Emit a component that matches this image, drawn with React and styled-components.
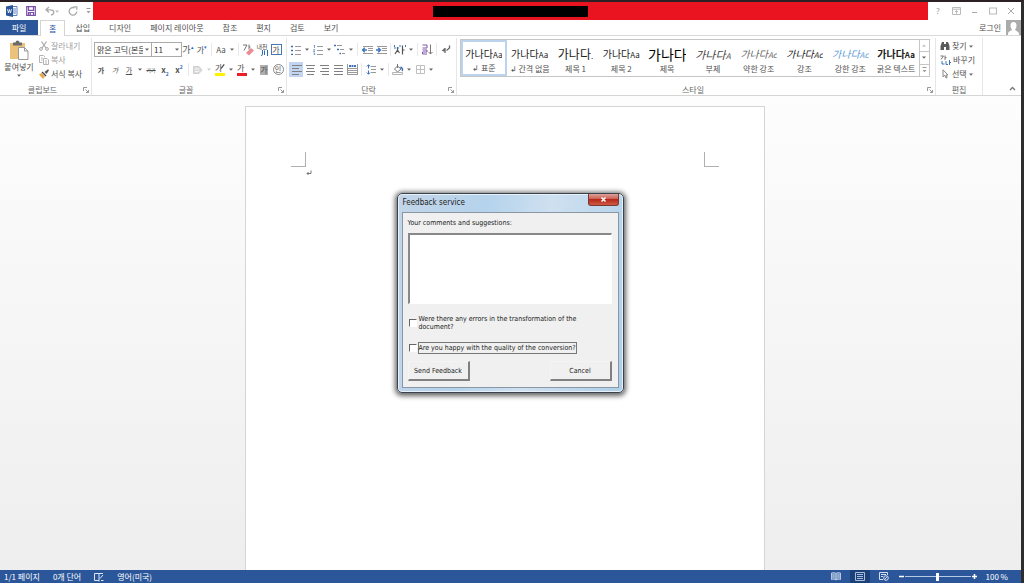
import React, { useState } from "react";
import styled, { createGlobalStyle, css } from "styled-components";

const GlobalStyle = createGlobalStyle`
  * { box-sizing: border-box; }
  body {
    margin: 0;
    font-family: "Noto Sans CJK KR", sans-serif;
    font-size: 8px;
    line-height: 12px;
    color: #505050;
  }
  button, select, input, textarea {
    font: inherit;
    color: inherit;
    margin: 0;
  }
  button {
    border: 0;
    padding: 0;
    background: none;
    white-space: nowrap;
  }
`;

const Window = styled.div`
  display: flex;
  flex-direction: column;
  min-height: 100vh;
  border-top: 2px solid #2c2024;
  border-right: 3px solid #2d2d30;
  background: #fff;
`;

/* ---------- title bar ---------- */

const TitleBar = styled.header`
  display: flex;
  height: 18px;
`;

const QuickAccess = styled.div`
  display: flex;
  align-items: center;
  width: 93px;
  padding-left: 5px;
  gap: 5px;
`;

const IconButton = styled.button`
  display: flex;
  align-items: center;
  justify-content: center;
  width: ${(p) => p.$w || 14}px;
  height: 14px;
  color: ${(p) => p.$color || "#777"};
`;

const TitleFill = styled.div`
  flex: 1;
  display: flex;
  align-items: center;
  justify-content: center;
  background: #ea1320;
`;

const TitleMask = styled.div`
  width: 155px;
  height: 11px;
  margin: 1px 0 0;
  background: #000;
`;

const WindowControls = styled.div`
  display: flex;
  align-items: center;
  justify-content: space-between;
  width: 93px;
  padding: 0 3px;
`;

/* ---------- tabs ---------- */

const TabRow = styled.nav`
  display: flex;
  height: 16px;
  gap: 1px;
  border-bottom: 1px solid #d9d9d9;
`;

const FileTab = styled.button`
  width: 38px;
  margin-right: 1px;
  background: #2b579a;
  color: #fff;
`;

const Tab = styled.button`
  padding: 0 9px;
  ${(p) => p.$active && css`
    height: 16px;
    border: 1px solid #d4d4d4;
    border-bottom: 0;
    padding: 0 8px;
    background: #fff;
    color: #2b579a;
  `}
`;

const SignIn = styled.button`
  display: flex;
  align-items: center;
  gap: 5px;
  margin-left: auto;
`;

/* ---------- ribbon ---------- */

const Ribbon = styled.div`
  display: grid;
  grid-template-columns: 92px 195px 170px 1fr 47px 38px;
  height: 60px;
  padding-top: 2px;
  border-bottom: 1px solid #d5d5d5;
`;

const Group = styled.section`
  display: flex;
  flex-direction: column;
  justify-content: space-between;
  min-width: 0;
  padding-left: 2px;
  border-right: 1px solid #e6e6e6;
`;

const GroupFooter = styled.div`
  display: flex;
  align-items: center;
  height: 10px;
  padding-right: 2px;
  color: #666;
  span { flex: 1; text-align: center; }
`;

const ToolRows = styled.div`
  display: flex;
  flex-direction: column;
  gap: 5px;
  padding-top: 4px;
`;

const ToolRow = styled.div`
  display: flex;
  align-items: center;
  height: 15px;
`;

const Tool = styled(IconButton)`
  height: 15px;
  color: #505050;
  background: ${(p) => (p.$active ? "#c2d5f2" : "none")};
`;

const ArrowButton = styled.button`
  display: flex;
  align-items: center;
  justify-content: center;
  width: 8px;
  height: 14px;
`;

const Divider = styled.i`
  width: 1px;
  height: 13px;
  margin: 0 2px;
  background: #e9e9e9;
`;

const Combo = styled.label`
  position: relative;
  display: flex;
  width: ${(p) => p.$w}px;
  height: 15px;
  border: 1px solid #ababab;
  margin-right: -1px;
  select {
    width: 100%;
    padding: 0 8px 0 2px;
    border: 0;
    appearance: none;
    background: #fff;
    color: #333;
    line-height: 13px;
  }
  svg { position: absolute; right: 2px; top: 5px; }
`;

const Glyph = styled.span`
  font-size: ${(p) => p.$size || 8}px;
  font-weight: ${(p) => (p.$bold ? 700 : 400)};
  font-style: ${(p) => (p.$italic ? "italic" : "normal")};
  line-height: 10px;
  text-decoration: ${(p) => p.$line || "none"};
  border-bottom: ${(p) => (p.$bar ? `3px solid ${p.$bar}` : 0)};
  background: ${(p) => p.$fill || "none"};
  ${(p) => p.$bar && css`
    display: flex;
    width: 10px;
    height: 13px;
    svg { margin-left: -3px; }
  `}
  ${(p) => p.$box && css`
    width: 11px;
    height: 11px;
    line-height: 9px;
    border: 1px solid ${p.$box};
    border-radius: ${p.$round ? "6px" : 0};
  `}
  sup, sub { font-size: 5px; line-height: 0; color: #2b6cb8; }
`;

const Ruby = styled.span`
  display: flex;
  flex-direction: column;
  align-items: flex-end;
  font-size: 6px;
  line-height: 7px;
`;

const ClipboardBody = styled.div`
  display: flex;
  gap: 4px;
  padding-left: 1px;
`;

const PasteButton = styled.button`
  display: flex;
  flex-direction: column;
  align-items: center;
  width: 32px;
  padding-top: 2px;
  gap: 1px;
`;

const CommandList = styled.div`
  display: flex;
  flex-direction: column;
  padding: 1px 0 0 ${(p) => p.$pad || 0}px;
`;

const Command = styled.button`
  display: flex;
  align-items: center;
  height: 14px;
  gap: 2px;
  color: ${(p) => (p.disabled ? "#a0a0a0" : "#505050")};
`;

const Gallery = styled.div`
  display: flex;
  height: 38px;
  margin: 1px 5px 0 1px;
  border: 1px solid #c6c6c6;
`;

const StyleCard = styled.button`
  flex: 1 1 0;
  display: flex;
  flex-direction: column;
  min-width: 0;
  align-items: center;
  justify-content: space-between;
  padding: ${(p) => (p.$active ? "3px 0 0" : "5px 2px 1px")};
  border: ${(p) => (p.$active ? "2px solid #bcd3ee" : 0)};
  overflow: hidden;
`;

const Sample = styled.span`
  max-width: 38px;
  overflow: hidden;
  font-size: ${(p) => p.$size || 10}px;
  line-height: 18px;
  color: ${(p) => p.$color || "#222"};
  font-style: ${(p) => (p.$italic ? "italic" : "normal")};
  font-weight: ${(p) => p.$weight || 400};
  small { font-size: 8px; }
`;

const GalleryScroll = styled.div`
  display: flex;
  flex-direction: column;
  width: 10px;
  border-left: 1px solid #c6c6c6;
  button {
    flex: 1;
    display: flex;
    align-items: center;
    justify-content: center;
  }
  button + button { border-top: 1px solid #c6c6c6; }
`;

const CollapseCell = styled.div`
  display: flex;
  align-items: flex-end;
  justify-content: flex-end;
  padding-right: 2px;
`;

/* ---------- document ---------- */

const Workspace = styled.main`
  position: relative;
  flex: 1;
  display: flex;
  justify-content: center;
  padding: 10px 11px 0 0;
  background: linear-gradient(#fdfdfd, #eeeeee);
`;

const Page = styled.article`
  width: 520px;
  max-width: 100%;
  padding: 45px 45px 0;
  border: 1px solid #d5d5d5;
  border-bottom: 0;
  background: #fff;
`;

const Margins = styled.div`
  display: flex;
  justify-content: space-between;
`;

const Corner = styled.i`
  width: 15px;
  height: 15px;
  border-bottom: 1px solid #b0b0b0;
  border-left: ${(p) => (p.$side === "right" ? "1px solid #b0b0b0" : 0)};
  border-right: ${(p) => (p.$side === "left" ? "1px solid #b0b0b0" : 0)};
`;

const Paragraph = styled.p`
  margin: 0;
  padding: 0 15px;
`;

/* ---------- feedback dialog ---------- */

const Dialog = styled.form`
  position: absolute;
  left: calc(50% - 114px);
  top: 97px;
  width: 227px;
  padding: 0 4px 4px;
  border: 1px solid #39434d;
  border-radius: 5px;
  background: linear-gradient(100deg, #c3d5e8, #b5d3ec 35%, #cfe0f0 60%, #aecfe8);
  box-shadow: inset 0 0 0 1px #e6f1fa, 0 1px 5px 2px rgba(0, 0, 0, 0.6);
  color: #222;
  font-family: "DejaVu Sans Condensed", "DejaVu Sans", sans-serif;
  font-size: 7px;
  line-height: 8px;
`;

const DialogTitle = styled.header`
  display: flex;
  justify-content: space-between;
  height: 18px;
  h1 {
    margin: 0;
    padding-left: 1px;
    font-size: 8px;
    font-weight: 400;
    line-height: 18px;
  }
`;

const CloseButton = styled.button`
  display: flex;
  align-items: center;
  justify-content: center;
  width: 31px;
  height: 12px;
  border: 1px solid #7a3833;
  border-top: 0;
  border-radius: 0 0 3px 3px;
  background: linear-gradient(#dea29a, #cb5f52 45%, #b5281b 50%, #cf5a45);
`;

const DialogBody = styled.div`
  display: flex;
  flex-direction: column;
  height: 176px;
  padding: 6px 6px 0 5px;
  border: 1px solid #8997a5;
  background: #f0f0f0;
`;

const Comments = styled.textarea`
  display: block;
  width: 100%;
  height: 71px;
  margin: 6px 0 10px;
  border: 1px solid #fff;
  border-top: 2px solid #888;
  border-left: 2px solid #888;
  background: #fff;
  resize: none;
  outline: 0;
`;

const CheckRow = styled.label`
  display: flex;
  align-items: center;
  height: 17px;
  gap: 1px;
  & + & { margin-top: 8px; }
  span {
    max-width: 166px;
    padding: 1px 0;
    border: 1px solid ${(p) => (p.$focused ? "#777" : "transparent")};
    white-space: nowrap;
  }
  input {
    flex: none;
    width: 8px;
    height: 8px;
    margin-left: 1px;
    appearance: none;
    border: 1px solid #fff;
    border-top-color: #666;
    border-left-color: #666;
    background: #fff;
  }
  input:checked { background: #555; }
`;

const DialogActions = styled.div`
  display: flex;
  justify-content: space-between;
  margin-top: 5px;
  button {
    width: 62px;
    height: 20px;
    border: 1px solid #f4f4f4;
    border-right: 2px solid #808080;
    border-bottom: 2px solid #808080;
    background: #f0f0f0;
  }
`;

/* ---------- status bar ---------- */

const StatusBar = styled.footer`
  display: flex;
  align-items: center;
  justify-content: space-between;
  height: 13px;
  padding: 0 13px 0 4px;
  background: #2b579a;
  color: #fff;
`;

const StatusGroup = styled.div`
  display: flex;
  align-items: center;
  gap: ${(p) => p.$gap}px;
`;

const ViewButton = styled(IconButton)`
  width: 20px;
  height: 13px;
  color: #d3deee;
  background: ${(p) => (p.$active ? "#1c4179" : "none")};
`;

const Zoom = styled.div`
  display: flex;
  align-items: center;
  margin-right: 4px;
  input {
    width: 66px;
    height: 10px;
    appearance: none;
    background: linear-gradient(#b8c9e3, #b8c9e3) center / 100% 1px no-repeat;
  }
  input::-webkit-slider-thumb {
    appearance: none;
    width: 3px;
    height: 8px;
    background: #fff;
  }
`;

/* ---------- icons ---------- */

const Svg = ({ size = 12, w, h, children, ...rest }) => (
  <svg width={w || size} height={h || size} viewBox={`0 0 ${w || size} ${h || size}`}
    fill="none" stroke="currentColor" aria-hidden="true" {...rest}>
    {children}
  </svg>
);

const Caret = ({ color = "#666" }) => (
  <Svg w={4} h={3}><path d="M0 0.5h4L2 2.7z" fill={color} stroke="none" /></Svg>
);

const Arrow = ({ label }) => <ArrowButton aria-label={label}><Caret /></ArrowButton>;

const Launcher = () => (
  <Svg size={6} stroke="#999"><path d="M0.5 4V0.5H4M2.5 2.5l3 3M5.5 3v2.5H3" /></Svg>
);

const WordIcon = () => (
  <Svg>
    <path d="M6 1.5h5v9H6M7 4h3M7 6h3M7 8h3" stroke="#5c82bd" />
    <path d="M0 1.5L7 0v12L0 10.5z" fill="#2b579a" stroke="none" />
    <path d="M1.5 4l1 4L3.5 4.5 4.5 8l1-4" stroke="#fff" strokeWidth="0.8" />
  </Svg>
);

const SaveIcon = () => (
  <Svg size={10} stroke="#7b4fa8">
    <path d="M0.7 0.7h8.6v8.6H0.7zM2.5 0.7v3.6h5V0.7M2.5 9.3V6.5h5v2.8M4.2 7v2" strokeWidth="1.2" />
  </Svg>
);

const UndoIcon = () => (
  <Svg w={10} h={10} stroke="#aaa" strokeWidth="1.3"><path d="M4 1L1 3.8 4 6.6M1 3.8h4.5c4.5 0 4 4.5 0.5 5.2" /></Svg>
);

const RedoIcon = () => (
  <Svg size={10} stroke="#aaa" strokeWidth="1.3"><path d="M6.5 1.8A3.8 3.8 0 1 0 8.8 5.5M5.5 0.8h3.3v3" /></Svg>
);

const CustomizeIcon = () => (
  <Svg w={5} h={6} stroke="#999"><path d="M0.5 0.5h4" /><path d="M0.5 3h4L2.5 5.3z" fill="#999" stroke="none" /></Svg>
);

const RibbonOptionsIcon = () => (
  <Svg w={9} h={8} stroke="#bbb"><path d="M0.5 0.5h8v7h-8zM0.5 2.2h8M4.5 6.8V3.6M3 5l1.5-1.5L6 5" /></Svg>
);
const MinimizeIcon = () => <Svg size={8} stroke="#aaa"><path d="M1 5.5h5" /></Svg>;
const MaximizeIcon = () => <Svg size={8} stroke="#bbb"><path d="M0.5 1v6h7V1M0 1h8" strokeWidth="1.2" /></Svg>;
const CloseIcon = () => <Svg size={8} stroke="#aaa"><path d="M1 1l6 6M7 1l-6 6" /></Svg>;

const Avatar = () => (
  <Svg w={15} h={15} stroke="none">
    <path d="M0 0h15v15H0z" fill="#ababab" />
    <path d="M7.5 2c-2.2 0-3 1.6-3 3.5S5.3 9 6 9.8C5.5 11 2.5 11 2 13.5V15h11v-1.5C12.5 11 9.5 11 9 9.8 9.7 9 10.5 7.5 10.5 5.5S9.7 2 7.5 2z" fill="#fff" />
  </Svg>
);

const PasteIcon = () => (
  <Svg w={20} h={20} stroke="none">
    <path d="M1 3h15v16H1z" fill="#ecc27a" />
    <path d="M4 2.5h2.5a2 2 0 0 1 4 0H13v3H4z" fill="#6b6b6b" />
    <path d="M9.5 7.5h6l3.5 3.5v8.5H9.5z" fill="#fff" stroke="#9a9a9a" />
    <path d="M15.5 7.5V11H19" stroke="#9a9a9a" />
  </Svg>
);

const CutIcon = () => (
  <Svg size={10} stroke="#a9a9a9">
    <path d="M2.5 0.5L7 7M7.5 0.5L3 7" strokeWidth="1.2" />
    <circle cx="2" cy="8" r="1.4" /><circle cx="8" cy="8" r="1.4" />
  </Svg>
);

const CopyIcon = () => (
  <Svg size={10} stroke="#b4b4b4">
    <path d="M3.5 7.5h-3v-7h4l1.5 1.5M4.5 3.5H8l1.5 1.5v4.5h-5zM2 3h2M2 5h1.5M6 6h2M6 8h2" />
  </Svg>
);

const PainterIcon = () => (
  <Svg size={10} stroke="none">
    <path d="M5.5 3L9 0.3l1 1L7.5 5z" fill="#555" />
    <path d="M3.5 2.5l4 4-1 1-4-4z" fill="#444" />
    <path d="M2.5 4L6 7.5 4 10 0 5.5z" fill="#e8a84c" />
  </Svg>
);

const EraserIcon = () => (
  <Svg>
    <path d="M1 1h4L2 6.5M7 0.5v5M7 3h1.5" stroke="#666" strokeWidth="0.9" />
    <path d="M4 9l5-5 3 2.5-5 5z" fill="#e98c93" stroke="none" />
  </Svg>
);

const EffectIcon = () => (
  <Svg size={10} stroke="#cfcfcf"><path d="M0.5 1.5H6l3 3.5-3 3.5H0.5z" fill="#dcdcdc" /><path d="M2 4h4M2 6.5h4" stroke="#f4f4f4" /></Svg>
);

const PenIcon = () => (
  <Svg w={7} h={9}><path d="M6.5 0.5L2.5 6" stroke="#555" strokeWidth="1.6" /><path d="M2.8 5.5L0.8 8.5" stroke="#888" /></Svg>
);

const StreamIcon = () => (
  <Svg w={7} h={6} stroke="#2b6cb8"><path d="M1.5 0v4L0.5 6M3.5 0.5v4.5M6.5 0v6" /></Svg>
);

const ListIcon = ({ numbered }) => (
  <Svg size={10} stroke="#999">
    <path d="M4 1.5h6M4 5.5h6M4 9.5h6" />
    {numbered
      ? <path d="M0.5 0h1v3M0.5 4.5h1.2L0.5 6.5h1.5M0.5 8h1.2v2H0.5" stroke="#5580bd" strokeWidth="0.8" />
      : <path d="M0 1.5h2M0 5.5h2M0 9.5h2" stroke="#3d6db3" strokeWidth="1.5" />}
  </Svg>
);

const MultiListIcon = () => (
  <Svg size={12} stroke="#999">
    <path d="M3 1.5h5M6 5.5h4M8 9.5h3" />
    <path d="M0 1.5h2M3 5.5h2M5.5 9.5h1.5" stroke="#3d6db3" strokeWidth="1.5" />
  </Svg>
);

const IndentIcon = ({ left }) => (
  <Svg w={11} h={10} stroke="#999">
    <path d="M1 1.5h10M6 3.5h5M6 5.5h5M1 8.5h10" />
    <path d={left ? "M5 5H0.5M2.8 2.8L0.5 5l2.3 2.2" : "M0 5h4.5M2.2 2.8L4.5 5 2.2 7.2"} stroke="#3d74bd" strokeWidth="1.4" />
  </Svg>
);

const AsianLayoutIcon = () => (
  <Svg w={12} h={10} stroke="#555">
    <path d="M3.5 2v3L1 9M3.5 5l2 3M8.5 0.5v9M8.5 5H10.5" strokeWidth="1.2" />
    <path d="M0.5 0v3M6 0v3M0 3h6M11.5 0v3" stroke="#3d74bd" strokeDasharray="2 1" />
  </Svg>
);

const SortIcon = () => (
  <Svg size={11}>
    <path d="M0.5 1h4.5v3M0.5 4h4.5M0.5 6h4.5v2H0.5v2h4.5" stroke="#8157a8" />
    <path d="M8.5 0.5v9.5M6.5 8l2 2 2-2" stroke="#777" />
  </Svg>
);

const MarksIcon = () => (
  <Svg size={9} stroke="#666"><path d="M7.5 0.5v2.5L4.5 5.5M3 3v5M3 3.5L1 5.5 3.5 6" strokeWidth="1.3" /></Svg>
);

const ALIGN = {
  left: "M1 0.5h10M1 3.5h7M1 6.5h10M1 9.5h7",
  center: "M1 0.5h9M2 3.5h7M1 6.5h9M2 9.5h7",
  right: "M1 0.5h9M3 3.5h7M1 6.5h9M3 9.5h7",
  justify: "M1 0.5h9M1 3.5h9M1 6.5h9M1 9.5h9",
};

const AlignIcon = ({ kind }) => <Svg w={11} h={10} stroke="#808080"><path d={ALIGN[kind]} /></Svg>;

const DistributeIcon = () => (
  <Svg size={11}>
    <path d="M0.5 0v11M10.5 0v11M1 4.5h9M1 6.5h9M1 8.5h9M1 10.5h9" stroke="#999" />
    <path d="M2 2h7" stroke="#3d74bd" strokeWidth="2" strokeDasharray="2 0.5" />
  </Svg>
);

const SpacingIcon = () => (
  <Svg w={11} h={11} stroke="#999">
    <path d="M5 2.5h5M5 5.5h5M5 8.5h5" />
    <path d="M2.5 1v3.5M2.5 6.5v3.5M0.8 2.5l1.7-1.8 1.7 1.8M0.8 8.5l1.7 1.8 1.7-1.8" stroke="#3d74bd" />
  </Svg>
);

const BucketIcon = () => (
  <Svg w={12} h={11} stroke="#777">
    <path d="M2.5 5L5.5 2 9 5 5.5 8z" fill="#fff" /><path d="M5.5 0v4" />
    <path d="M8.5 3c2 1 2.5 2.5 1.5 4" stroke="#3d74bd" strokeWidth="1.5" />
    <path d="M0.5 8.5h10v2H0.5z" stroke="#b5b5b5" fill="#fff" />
  </Svg>
);

const BorderIcon = () => (
  <Svg size={9} stroke="#c0c0c0"><path d="M0.5 0.5h8v8h-8zM4.5 0v9M0 4.5h9" /></Svg>
);

const FindIcon = () => (
  <Svg size={10} stroke="none">
    <path d="M2 1h2v2h2V1h2L9.5 5v4H6V6H4v3H0.5V5z" fill="#5a5a5a" />
  </Svg>
);

const ReplaceIcon = () => (
  <Svg size={11}>
    <path d="M0.5 1h3L1 4.5M5 0.5V5M5 2.5h1.5" stroke="#777" />
    <path d="M2 6v3h2.5M6 6v3.5h2M9.5 5v5M9.5 7.5H11" stroke="#3d74bd" />
  </Svg>
);

const SelectIcon = () => (
  <Svg size={10} stroke="#888"><path d="M3 0.8v7l1.8-1.6L6 9l1.2-0.5L6 6h2z" fill="#fff" /></Svg>
);

const ReturnMark = () => (
  <Svg w={6} h={6} stroke="#777"><path d="M5 0.5v3H1M2.5 2L1 3.5 2.5 5" /></Svg>
);

const ProofIcon = () => (
  <Svg size={10} stroke="#dbe5f3"><path d="M5 1.5H0.5v7H5v1M5 1.5v7M5 1.5h4M7 8.5h2.5M9 3L6 6.5" /></Svg>
);
const ReadIcon = () => (
  <Svg w={10} h={9}><path d="M5 1.5C4 0.5 2 0.5 0.5 1v6.5c1.5-0.5 3.5-0.5 4.5 0.5 1-1 3-1 4.5-0.5V1C8 0.5 6 0.5 5 1.5zV8M1.5 3h2M1.5 5h2M6.5 3h2M6.5 5h2" fill="#6e8fc0" strokeWidth="0.8" /></Svg>
);
const PrintViewIcon = () => (
  <Svg w={10} h={9} stroke="#a9bfdd"><path d="M0.5 0.5h9v8h-9zM2 2.5h6M2 4.5h6M2 6.5h6" /></Svg>
);
const WebViewIcon = () => (
  <Svg w={10} h={9}><path d="M4 7.5H0.5v-7h8V3M2 2.5h5M2 4.5h2" /><circle cx="7" cy="6" r="2.3" /><path d="M5.5 7.5l3-3" /></Svg>
);

/* ---------- app ---------- */

const TABS = ["홈", "삽입", "디자인", "페이지 레이아웃", "참조", "편지", "검토", "보기"];

const STYLES = [
  { name: "↲ 표준" },
  { name: "↲ 간격 없음" },
  { name: "제목 1", size: 12, tail: "." },
  { name: "제목 2" },
  { name: "제목", size: 14, tail: "", color: "#000" },
  { name: "부제", size: 11, tail: "A", italic: true, color: "#444" },
  { name: "약한 강조", italic: true, tail: "Ac", color: "#666" },
  { name: "강조", italic: true, tail: "Ac" },
  { name: "강한 강조", italic: true, tail: "Ac", color: "#5b9bd5" },
  { name: "굵은 텍스트", weight: 700 },
];

const RibbonGroup = ({ title, launcher = true, children }) => (
  <Group aria-label={title}>
    {children}
    <GroupFooter>
      <span>{title}</span>
      {launcher && <button aria-label={`${title} 옵션`}><Launcher /></button>}
    </GroupFooter>
  </Group>
);

const Feedback = () => {
  const [errors, setErrors] = useState(false);
  const [happy, setHappy] = useState(false);

  return (
    <Dialog onSubmit={(e) => e.preventDefault()}>
      <DialogTitle>
        <h1>Feedback service</h1>
        <CloseButton type="button" aria-label="Close">
          <Svg size={7} stroke="#fff"><path d="M1.5 1.5l4 4M5.5 1.5l-4 4" strokeWidth="1.5" /></Svg>
        </CloseButton>
      </DialogTitle>
      <DialogBody>
        <label htmlFor="comments">Your comments and suggestions:</label>
        <Comments id="comments" />
        <CheckRow>
          <input type="checkbox" checked={errors} onChange={(e) => setErrors(e.target.checked)} />
          <span>Were there any errors in the transformation of the<br />document?</span>
        </CheckRow>
        <CheckRow $focused>
          <input type="checkbox" checked={happy} onChange={(e) => setHappy(e.target.checked)} />
          <span>Are you happy with the quality of the conversion?</span>
        </CheckRow>
        <DialogActions>
          <button type="submit">Send Feedback</button>
          <button type="button">Cancel</button>
        </DialogActions>
      </DialogBody>
    </Dialog>
  );
};

const App = () => {
  const [zoom, setZoom] = useState(100);

  return (
    <Window>
      <GlobalStyle />
      <TitleBar>
        <QuickAccess>
          <IconButton aria-label="Word"><WordIcon /></IconButton>
          <IconButton aria-label="저장"><SaveIcon /></IconButton>
          <IconButton aria-label="실행 취소" $w={18}><UndoIcon /><Caret color="#bbb" /></IconButton>
          <IconButton aria-label="다시 실행"><RedoIcon /></IconButton>
          <IconButton aria-label="사용자 지정" $w={6}><CustomizeIcon /></IconButton>
        </QuickAccess>
        <TitleFill><TitleMask /></TitleFill>
        <WindowControls>
          <IconButton aria-label="도움말" $color="#999">?</IconButton>
          <IconButton aria-label="리본 표시 옵션"><RibbonOptionsIcon /></IconButton>
          <IconButton aria-label="최소화"><MinimizeIcon /></IconButton>
          <IconButton aria-label="최대화"><MaximizeIcon /></IconButton>
          <IconButton aria-label="닫기"><CloseIcon /></IconButton>
        </WindowControls>
      </TitleBar>

      <TabRow>
        <FileTab>파일</FileTab>
        {TABS.map((tab, i) => <Tab key={tab} $active={i === 0}>{tab}</Tab>)}
        <SignIn>로그인 <Avatar /></SignIn>
      </TabRow>

      <Ribbon>
        <RibbonGroup title="클립보드">
          <ClipboardBody>
            <PasteButton><PasteIcon /><span>붙여넣기</span><Caret /></PasteButton>
            <CommandList>
              <Command disabled><CutIcon />잘라내기</Command>
              <Command disabled><CopyIcon />복사</Command>
              <Command><PainterIcon />서식 복사</Command>
            </CommandList>
          </ClipboardBody>
        </RibbonGroup>

        <RibbonGroup title="글꼴">
          <ToolRows>
            <ToolRow>
              <Combo $w={58}>
                <select aria-label="글꼴"><option>맑은 고딕(본문)</option></select>
                <Caret />
              </Combo>
              <Combo $w={31}>
                <select aria-label="글꼴 크기"><option>11</option></select>
                <Caret />
              </Combo>
              <Tool aria-label="글꼴 크게"><Glyph $size={9}>가<sup>▴</sup></Glyph></Tool>
              <Tool aria-label="글꼴 작게"><Glyph>가<sup>▾</sup></Glyph></Tool>
              <Divider />
              <Tool aria-label="대/소문자 바꾸기"><Glyph>Aa</Glyph></Tool>
              <Arrow label="대/소문자 옵션" />
              <Divider />
              <Tool aria-label="서식 지우기"><EraserIcon /></Tool>
              <Tool aria-label="윗주 달기"><Ruby>내천<StreamIcon /></Ruby></Tool>
              <Tool aria-label="문자 테두리"><Glyph $box="#4a78b5">가</Glyph></Tool>
            </ToolRow>
            <ToolRow>
              <Tool aria-label="굵게"><Glyph $size={7} $bold>가</Glyph></Tool>
              <Tool aria-label="기울임꼴"><Glyph $size={7} $italic>가</Glyph></Tool>
              <Tool aria-label="밑줄"><Glyph $size={7} $line="underline">가</Glyph></Tool>
              <Arrow label="밑줄 옵션" />
              <Tool aria-label="취소선"><Glyph $size={5} $line="line-through">가가</Glyph></Tool>
              <Tool aria-label="아래 첨자"><Glyph $bold>x<sub>2</sub></Glyph></Tool>
              <Tool aria-label="위 첨자"><Glyph $bold>x<sup>2</sup></Glyph></Tool>
              <Divider />
              <Tool aria-label="텍스트 효과"><EffectIcon /></Tool>
              <ArrowButton aria-label="텍스트 효과 옵션"><Caret color="#ccc" /></ArrowButton>
              <Tool aria-label="강조색"><Glyph $bar="#fff200">가<PenIcon /></Glyph></Tool>
              <Arrow label="강조색 옵션" />
              <Tool aria-label="글꼴 색"><Glyph $bar="#ee1c25">가</Glyph></Tool>
              <Arrow label="글꼴 색 옵션" />
              <Tool aria-label="문자 음영"><Glyph $fill="#b0b0b0">가</Glyph></Tool>
              <Tool aria-label="원 문자"><Glyph $box="#888" $round $size={7}>인</Glyph></Tool>
            </ToolRow>
          </ToolRows>
        </RibbonGroup>

        <RibbonGroup title="단락">
          <ToolRows>
            <ToolRow>
              <Tool aria-label="글머리 기호"><ListIcon /></Tool>
              <Arrow label="글머리 기호 옵션" />
              <Tool aria-label="번호 매기기"><ListIcon numbered /></Tool>
              <Arrow label="번호 매기기 옵션" />
              <Tool aria-label="다단계 목록"><MultiListIcon /></Tool>
              <Arrow label="다단계 목록 옵션" />
              <Divider />
              <Tool aria-label="내어쓰기"><IndentIcon left /></Tool>
              <Tool aria-label="들여쓰기"><IndentIcon /></Tool>
              <Divider />
              <Tool aria-label="한자 레이아웃"><AsianLayoutIcon /></Tool>
              <Arrow label="한자 레이아웃 옵션" />
              <Divider />
              <Tool aria-label="정렬"><SortIcon /></Tool>
              <Divider />
              <Tool aria-label="편집 기호 표시"><MarksIcon /></Tool>
            </ToolRow>
            <ToolRow>
              <Tool aria-label="왼쪽 맞춤" $active><AlignIcon kind="left" /></Tool>
              <Tool aria-label="가운데 맞춤"><AlignIcon kind="center" /></Tool>
              <Tool aria-label="오른쪽 맞춤"><AlignIcon kind="right" /></Tool>
              <Tool aria-label="양쪽 맞춤"><AlignIcon kind="justify" /></Tool>
              <Tool aria-label="균등 분할"><DistributeIcon /></Tool>
              <Divider />
              <Tool aria-label="줄 간격"><SpacingIcon /></Tool>
              <Arrow label="줄 간격 옵션" />
              <Divider />
              <Tool aria-label="음영"><BucketIcon /></Tool>
              <Arrow label="음영 옵션" />
              <Tool aria-label="테두리"><BorderIcon /></Tool>
              <Arrow label="테두리 옵션" />
            </ToolRow>
          </ToolRows>
        </RibbonGroup>

        <RibbonGroup title="스타일">
          <Gallery>
            {STYLES.map(({ name, tail = "Aa", ...s }, i) => (
              <StyleCard key={name} $active={i === 0}>
                <Sample $size={s.size} $italic={s.italic} $weight={s.weight} $color={s.color}>
                  가나다<small>{tail}</small>
                </Sample>
                <span>{name}</span>
              </StyleCard>
            ))}
            <GalleryScroll>
              <button aria-label="위로"><Svg w={4} h={3}><path d="M0 2.5h4L2 0.5z" fill="#bbb" stroke="none" /></Svg></button>
              <button aria-label="아래로"><Caret /></button>
              <button aria-label="자세히"><CustomizeIcon /></button>
            </GalleryScroll>
          </Gallery>
        </RibbonGroup>

        <RibbonGroup title="편집" launcher={false}>
          <CommandList $pad={2}>
            <Command><FindIcon />찾기 <Caret /></Command>
            <Command><ReplaceIcon />바꾸기</Command>
            <Command><SelectIcon />선택<Caret /></Command>
          </CommandList>
        </RibbonGroup>

        <CollapseCell>
          <IconButton aria-label="리본 축소"><Svg w={7} h={5}><path d="M1 4l2.5-2.5L6 4" strokeWidth="1.3" /></Svg></IconButton>
        </CollapseCell>
      </Ribbon>

      <Workspace>
        <Page>
          <Margins><Corner $side="left" /><Corner $side="right" /></Margins>
          <Paragraph><ReturnMark /></Paragraph>
        </Page>
        <Feedback />
      </Workspace>

      <StatusBar>
        <StatusGroup $gap={13}>
          <span>1/1 페이지</span>
          <span>0개 단어</span>
          <ProofIcon />
          <span>영어(미국)</span>
        </StatusGroup>
        <StatusGroup $gap={4}>
          <ViewButton aria-label="읽기 모드"><ReadIcon /></ViewButton>
          <ViewButton aria-label="인쇄 모양" $active><PrintViewIcon /></ViewButton>
          <ViewButton aria-label="웹 모양"><WebViewIcon /></ViewButton>
          <Zoom>
            <Svg size={7}><path d="M1 3.5h5" strokeWidth="1.5" /></Svg>
            <input type="range" aria-label="확대/축소" min="10" max="190" value={zoom} onChange={(e) => setZoom(e.target.value)} />
            <Svg size={7}><path d="M1 3.5h5M3.5 1v5" strokeWidth="1.5" /></Svg>
          </Zoom>
          <span>{zoom} %</span>
        </StatusGroup>
      </StatusBar>
    </Window>
  );
};

export default App;
